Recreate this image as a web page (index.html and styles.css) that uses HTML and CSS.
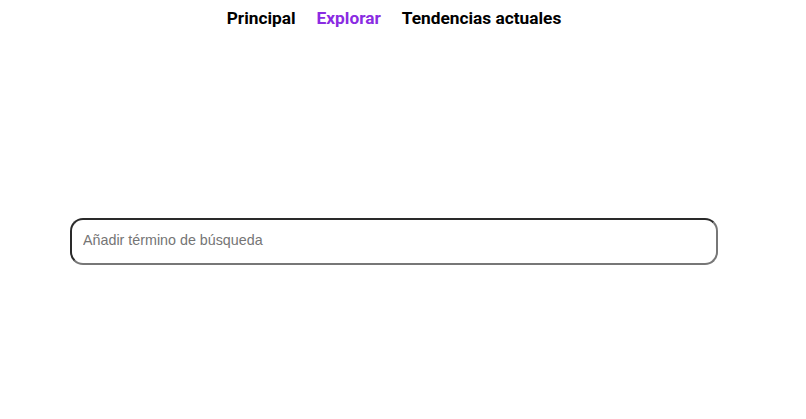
FILE: index.html
```
<!DOCTYPE html>
<html lang="es">
<head>
<meta charset="utf-8">
<link rel="stylesheet" href="styles.css">
</head>
<body>
<nav class="nav">
  <a class="nav-link" href="#">Principal</a>
  <a class="nav-link active" href="#">Explorar</a>
  <a class="nav-link" href="#">Tendencias actuales</a>
</nav>
<main class="main">
  <input class="search" type="text" placeholder="Añadir término de búsqueda">
</main>
</body>
</html>
```
FILE: styles.css
```
html, body {
  margin: 0;
  padding: 0;
  background: #fff;
}
body {
  width: 806px;
  height: 419px;
  overflow: hidden;
  font-family: "Liberation Sans", Arial, sans-serif;
}
.nav {
  display: flex;
  justify-content: center;
  gap: 21px;
  padding: 8px 18px 0 0;
  height: 22px;
}
.nav-link {
  font-family: Roboto, "Liberation Sans", sans-serif;
  font-weight: 700;
  font-size: 17.3px;
  line-height: 20px;
  color: #000;
  text-decoration: none;
}
.nav-link.active {
  color: #8a2be2;
}
.main {
  padding: 188px 0 0 70px;
}
.search {
  box-sizing: border-box;
  display: block;
  width: 648px;
  height: 47px;
  margin: 0;
  padding: 0 11px 3px 11px;
  border: 2px solid;
  border-color: #2a2a2a #777 #777 #2a2a2a;
  border-radius: 13px;
  font-family: "Liberation Sans", Arial, sans-serif;
  font-size: 14.3px;
  color: #000;
  outline: none;
}
.search::placeholder {
  color: #757575;
}
```
